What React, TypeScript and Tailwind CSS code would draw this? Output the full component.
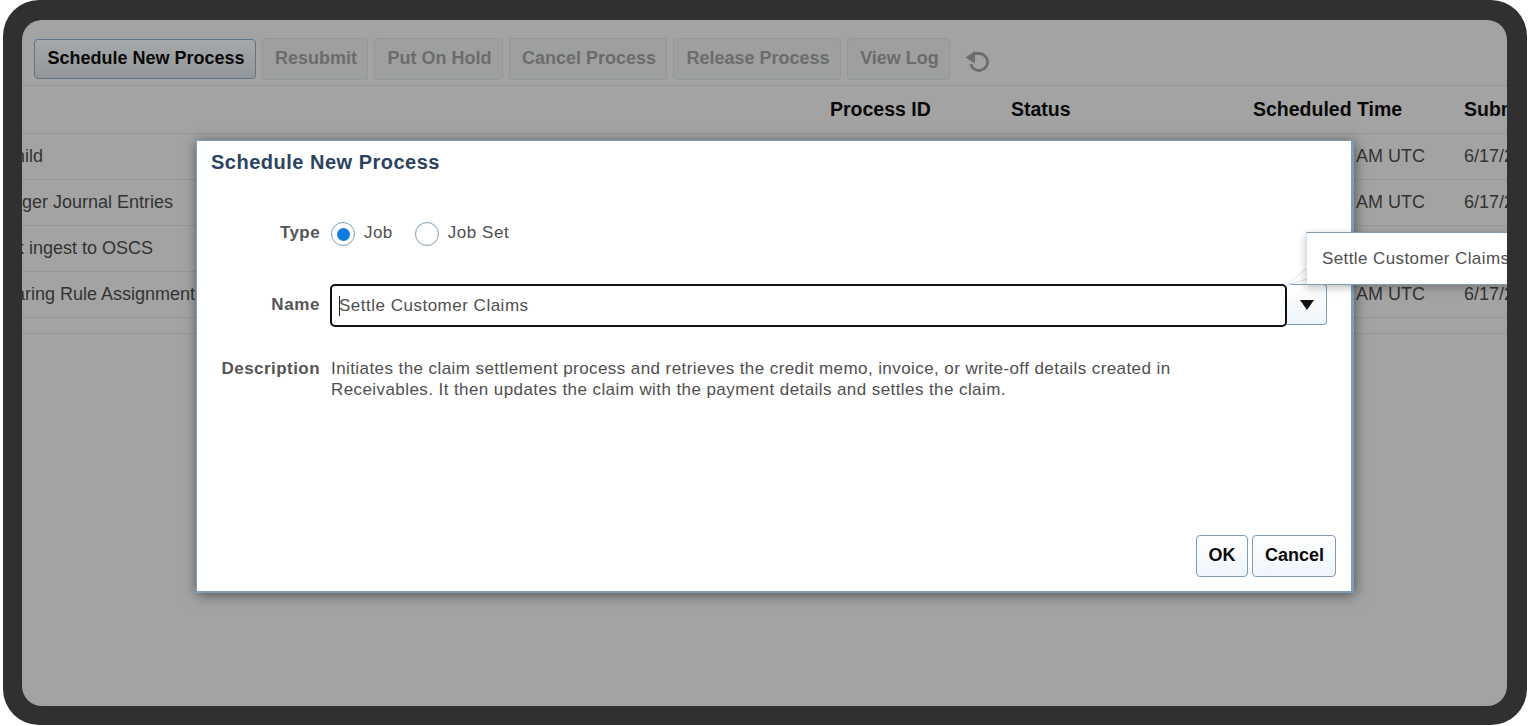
const font = { fontFamily: '"Liberation Sans", Arial, sans-serif' };

function ToolButton({ label, width, primary }: { label: string; width: string; primary?: boolean }) {
  return (
    <div
      className={
        primary
          ? `${width} h-10 flex items-center justify-center pl-[2px] pb-[2px] rounded-[4px] border border-[#5f7488] bg-gradient-to-b from-[#a5a8aa] to-[#939799] text-[18px] font-bold text-[#0a0a0a]`
          : `${width} h-[42px] flex items-center justify-center pl-[2px] pb-[2px] rounded-[3px] border border-[#959898] bg-[#9da09f] text-[18px] font-bold text-[#6c6c6c]`
      }
    >
      {label}
    </div>
  );
}

function Row({ text, offset, time, sub }: { text: string; offset: string; time?: string; sub?: string }) {
  return (
    <div className="h-[46px] shrink-0 border-b border-[#969696] flex items-center text-[18px] text-[#333333] whitespace-nowrap">
      <div className={`${offset} flex-1`}>{text}</div>
      <div className="w-[200px] text-right">{time}</div>
      <div className="w-[43px] ml-[39px] overflow-hidden">{sub}</div>
    </div>
  );
}

export default function App() {
  return (
    <div style={font} className="w-[1530px] h-[726px] bg-white pl-[3px] pr-[3px] pb-[1px] overflow-hidden">
      <div className="w-full h-full rounded-[36px] bg-[#303030] pt-5 pb-[19px] pl-[19px] pr-[20px]">
        <div className="relative w-full h-full rounded-[20px] bg-[#a3a3a3] overflow-hidden flex flex-col">
          <div className="h-[66px] shrink-0 border-b border-[#919696] pl-3 pt-[19px] flex items-start gap-[6px]">
            <ToolButton label="Schedule New Process" width="w-[222px]" primary />
            <ToolButton label="Resubmit" width="w-[106px] -mt-px" />
            <ToolButton label="Put On Hold" width="w-[129px] -mt-px" />
            <ToolButton label="Cancel Process" width="w-[158px] -mt-px" />
            <ToolButton label="Release Process" width="w-[168px] -mt-px" />
            <ToolButton label="View Log" width="w-[103px] -mt-px" />
            <svg viewBox="0 0 26 26" className="w-[26px] h-[26px] ml-[9px] mt-[9px]" fill="none">
              <path d="M9 5.5 H14 A8.5 8.5 0 1 1 5.8 16" stroke="#6a6e70" strokeWidth="2.8" />
              <path d="M0.5 9.5 L10 3 V15.5 Z" fill="#6a6e70" />
            </svg>
          </div>
          <div className="h-[48px] shrink-0 border-b border-[#969696] relative text-[19.5px] font-bold text-[#0a0a0a] whitespace-nowrap flex items-center">
            <div className="ml-[808px] w-[181px]">Process ID</div>
            <div className="w-[242px]">Status</div>
            <div className="w-[211px]">Scheduled Time</div>
            <div className="w-[43px] overflow-hidden">Submitted</div>
          </div>
          <Row text="Child" offset="ml-[-20px]" time="AM UTC" sub="6/17/2024" />
          <Row text="Ledger Journal Entries" offset="ml-[-30px]" time="AM UTC" sub="6/17/2024" />
          <Row text="Bulk ingest to OSCS" offset="ml-[-33px]" time="AM UTC" sub="6/17/2024" />
          <Row text="Clearing Rule Assignment" offset="ml-[-34px]" time="AM UTC" sub="6/17/2024" />
          <div className="h-[16px] shrink-0 border-b border-[#969696]" />

          <div className="absolute left-[174px] top-[120px] w-[1158px] h-[453px] bg-white border border-[#7d9cb8] border-r-[3px] border-b-2 shadow-[1px_2px_12px_rgba(0,0,0,0.5)] text-[#4f4f4f] flex flex-col">
            <h1 className="pl-[14px] pt-[9px] text-[20px] leading-6 font-bold tracking-[0.5px] text-[#2b435f]">Schedule New Process</h1>
            <div className="mt-[47px] grid grid-cols-[123px_1fr] text-[17px]">
              <div className="text-right font-bold leading-[24px] tracking-[0.4px] text-[#555555]">Type</div>
              <div className="pl-[11px] flex items-center h-[26px]">
                <span className="w-6 h-6 rounded-full border border-[#7d9cb8] flex items-center justify-center">
                  <span className="w-[13px] h-[13px] rounded-full bg-[#0f7ae0]" />
                </span>
                <span className="ml-[9px] -mt-[3px] tracking-[0.45px]">Job</span>
                <span className="ml-[22px] w-6 h-6 rounded-full border border-[#7d9cb8]" />
                <span className="ml-[9px] -mt-[3px] tracking-[0.55px]">Job Set</span>
              </div>
              <div className="text-right font-bold mt-[37px] leading-[42px] tracking-[0.6px] text-[#555555]">Name</div>
              <div className="pl-[10px] mt-[37px] flex">
                <div className="w-[957px] h-[43px] rounded-[5px] border-2 border-[#111111] flex items-center pl-[7px] tracking-[0.5px]">
                  <span className="w-px h-[20px] bg-[#222222] -mr-px" />
                  Settle Customer Claims
                </div>
                <div className="w-[40px] h-[41px] rounded-r-[4px] border border-l-0 border-[#7d9cb8] bg-gradient-to-b from-white to-[#eff5fa] flex items-center justify-center">
                  <svg viewBox="0 0 14 10" className="w-[14px] h-[10px] mt-px"><path d="M0 0 H14 L7 10 Z" fill="#111111" /></svg>
                </div>
              </div>
              <div className="text-right font-bold mt-[31px] leading-[21px] tracking-[0.45px] text-[#555555]">Description</div>
              <div className="pl-[11px] mt-[31px] leading-[21px] w-[880px] tracking-[0.42px]">
                Initiates the claim settlement process and retrieves the credit memo, invoice, or write-off details created in Receivables. It then updates the claim with the payment details and settles the claim.
              </div>
            </div>
            <div className="mt-auto mb-[14px] mr-[15px] flex justify-end gap-1 text-[18px] font-bold text-[#0a0a0a]">
              <div className="w-[52px] h-[42px] pb-[2px] rounded-[4px] border border-[#7d9cb8] bg-gradient-to-b from-white to-[#eff5fa] flex items-center justify-center">OK</div>
              <div className="w-[84px] h-[42px] pb-[2px] pl-[1px] rounded-[4px] border border-[#7d9cb8] bg-gradient-to-b from-white to-[#eff5fa] flex items-center justify-center">Cancel</div>
            </div>
          </div>

          <svg className="absolute left-[1264px] top-[246px]" width="22" height="20" viewBox="0 0 22 20">
            <path d="M21 2 L1 19 L21 13 Z" fill="#ffffff" stroke="#d5e0ea" strokeWidth="1" />
          </svg>
          <div className="absolute left-[1284px] top-[212px] w-[220px] h-[53px] bg-white border-t border-t-[#7d9cb8] border-b border-b-[#7d9cb8] border-l border-l-[#d5e0ea] shadow-[0_3px_8px_rgba(0,0,0,0.25)] pl-[15px] flex items-center text-[17px] tracking-[0.4px] text-[#4f4f4f] whitespace-nowrap">
            Settle Customer Claims
          </div>
        </div>
      </div>
    </div>
  );
}
